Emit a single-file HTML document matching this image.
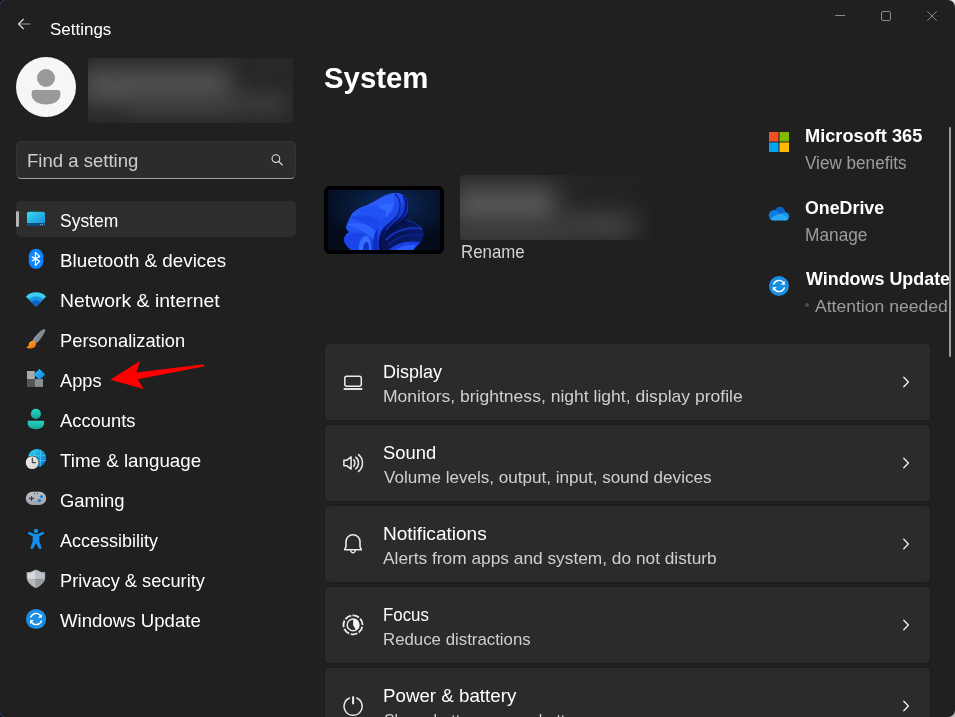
<!DOCTYPE html>
<html lang="en">
<head>
<meta charset="utf-8">
<title>Settings</title>
<style>
*{box-sizing:border-box;margin:0;padding:0}
html,body{width:955px;height:717px;overflow:hidden}
body{font-family:"Liberation Sans",sans-serif;color:#fff;position:relative;background:#202020}
.k{position:absolute;width:12px;height:12px}
.win{position:absolute;left:0;top:0;width:955px;height:717px;background:#202020;border-radius:7px;overflow:hidden}
.abs{position:absolute}
.t{position:absolute;white-space:nowrap;line-height:1;transform-origin:0 50%}
.card{position:absolute;left:324px;width:607px;height:78px;background:#2b2b2b;border:1px solid #1c1c1c;border-radius:5px}
svg{position:absolute;overflow:visible}
</style>
</head>
<body>
<div class="k" style="left:0;top:0;background:#070d1c"></div><div class="k" style="left:0;bottom:0;background:#070d1c"></div><div class="k" style="right:0;top:0;background:#e2e2e2"></div><div class="k" style="right:0;bottom:0;background:#bcbcbc"></div><div style="position:absolute;left:-1px;top:-1px;width:16px;height:16px;border:1px solid rgba(64,72,92,.9);border-right:0;border-bottom:0;border-radius:8px 0 0 0"></div><div style="position:absolute;left:-1px;bottom:-1px;width:16px;height:16px;border:1px solid rgba(64,72,92,.9);border-right:0;border-top:0;border-radius:0 0 0 8px"></div>
<div class="win">
<svg style="left:16px;top:16px" width="16" height="16" viewBox="0 0 16 16"><path d="M2.600 8 H13.800" stroke="#9c9c9c" stroke-width="1.200" stroke-linecap="round"/><path d="M7.400 3.300 L2.600 8 L7.400 12.700" fill="none" stroke="#dcdcdc" stroke-width="1.200" stroke-linecap="round" stroke-linejoin="round"/></svg>
<div class="t" style="left:49.80px;top:22.19px;font-size:15.84px;color:#ffffff;transform:scaleX(1.0720);">Settings</div>
<svg style="left:830px;top:8px" width="112" height="16" viewBox="830 8 112 16"><path d="M835.200 15.500 H845" stroke="#8c8c8c" stroke-width="1"/><rect x="881.500" y="11.500" width="9" height="9" rx="1.400" fill="none" stroke="#8c8c8c" stroke-width="1"/><path d="M927.300 11.200 L936.700 20.800 M936.700 11.200 L927.300 20.800" stroke="#8c8c8c" stroke-width="1"/></svg>

<div class="abs" style="left:16px;top:57px;width:60px;height:60px;border-radius:50%;background:#f6f6f6"></div>
<div class="abs" style="left:37px;top:69.400px;width:18px;height:18px;border-radius:50%;background:#999"></div>
<svg style="left:31px;top:89px" width="30" height="16" viewBox="31 89 30 16"><path d="M34.100 90 H57.900 A2.500 2.500 0 0 1 60.400 92.500 V94.500 C60.400 101 53.500 104.500 46 104.500 C38.500 104.500 31.600 101 31.600 94.500 V92.500 A2.500 2.500 0 0 1 34.100 90 Z" fill="#999"/></svg>
<div class="abs" style="left:88px;top:58px;width:205px;height:65px;background:#282828;border-radius:3px;overflow:hidden"><div style="position:absolute;left:-6px;top:10px;width:148px;height:36px;background:#525252;filter:blur(11px)"></div><div style="position:absolute;left:40px;top:38px;width:156px;height:16px;background:#424242;filter:blur(10px)"></div></div>

<div class="abs" style="left:16px;top:141px;width:280px;height:38px;background:#2c2c2c;border:1px solid #343434;border-bottom:1px solid #9c9c9c;border-radius:5px"></div>
<div class="t" style="left:27.29px;top:151.80px;font-size:18.31px;color:#cdcdcd;transform:scaleX(1.0133);">Find a setting</div>
<svg style="left:268px;top:150px" width="20" height="20" viewBox="268 150 20 20"><circle cx="275.900" cy="158.600" r="3.850" fill="none" stroke="#dedede" stroke-width="1.100"/><path d="M278.900 161.600 L282.200 164.900" stroke="#e8e8e8" stroke-width="1.300" stroke-linecap="round"/></svg>

<div class="abs" style="left:16px;top:201px;width:280px;height:36px;background:#2d2d2d;border-radius:5px"></div>
<div class="abs" style="left:16px;top:211px;width:3px;height:16px;background:#b4b4b4;border-radius:1.500px"></div>
<div class="t" style="left:60.40px;top:211.80px;font-size:18.31px;color:#ffffff;transform:scaleX(0.9546);">System</div><div class="t" style="left:60.07px;top:251.80px;font-size:18.31px;color:#ffffff;transform:scaleX(1.0269);">Bluetooth &amp; devices</div><div class="t" style="left:60.04px;top:291.80px;font-size:18.31px;color:#ffffff;transform:scaleX(1.0608);">Network &amp; internet</div><div class="t" style="left:60.10px;top:331.80px;font-size:18.31px;color:#ffffff;transform:scaleX(0.9998);">Personalization</div><div class="t" style="left:60.20px;top:371.80px;font-size:18.31px;color:#ffffff;transform:scaleX(0.9963);">Apps</div><div class="t" style="left:60.20px;top:411.80px;font-size:18.31px;color:#ffffff;transform:scaleX(1.0038);">Accounts</div><div class="t" style="left:60.40px;top:451.80px;font-size:18.31px;color:#ffffff;transform:scaleX(1.0257);">Time &amp; language</div><div class="t" style="left:59.80px;top:491.80px;font-size:18.31px;color:#ffffff;transform:scaleX(1.0081);">Gaming</div><div class="t" style="left:60.20px;top:531.80px;font-size:18.31px;color:#ffffff;transform:scaleX(0.9832);">Accessibility</div><div class="t" style="left:60.10px;top:571.80px;font-size:18.31px;color:#ffffff;transform:scaleX(0.9963);">Privacy &amp; security</div><div class="t" style="left:60.40px;top:611.80px;font-size:18.31px;color:#ffffff;transform:scaleX(1.0179);">Windows Update</div>
<svg style="left:0;top:0" width="60" height="717" viewBox="0 0 60 717">
<defs>
<linearGradient id="gSys" x1="0" y1="0" x2="1" y2="1"><stop offset="0" stop-color="#35dcf0"/><stop offset="1" stop-color="#1688d6"/></linearGradient>
<linearGradient id="gBrush" x1="0" y1="0" x2="1" y2="0.6"><stop offset="0" stop-color="#a9b2bb"/><stop offset="1" stop-color="#6a747d"/></linearGradient>
<linearGradient id="gOr" x1="0" y1="0" x2="1" y2="1"><stop offset="0" stop-color="#ffc21a"/><stop offset="1" stop-color="#f25a12"/></linearGradient>
<linearGradient id="gDia" x1="0" y1="0" x2="1" y2="1"><stop offset="0" stop-color="#34bcfb"/><stop offset="1" stop-color="#0c7edc"/></linearGradient>
<linearGradient id="gTeal" x1="0" y1="0" x2="0" y2="1"><stop offset="0" stop-color="#27d4c0"/><stop offset="1" stop-color="#16a596"/></linearGradient>
<linearGradient id="gGlobe" x1="0.1" y1="0.1" x2="0.9" y2="0.9"><stop offset="0" stop-color="#2ad0ec"/><stop offset="1" stop-color="#1270d6"/></linearGradient>
<linearGradient id="gClock" x1="0" y1="0" x2="1" y2="1"><stop offset="0" stop-color="#f2f2f2"/><stop offset="1" stop-color="#cfcfcf"/></linearGradient>
<linearGradient id="gPad" x1="0" y1="0" x2="0" y2="1"><stop offset="0" stop-color="#bcc1c8"/><stop offset="1" stop-color="#9ca1a8"/></linearGradient>
<clipPath id="cGlobe"><circle cx="37.1" cy="458" r="9.1"/></clipPath>
<clipPath id="cShield"><path d="M26.800 572.300 H29.600 C32.400 572.300 33.200 569.800 35.900 569.800 C38.600 569.800 39.400 572.300 42.200 572.300 H45.100 V577.500 C45.100 582 40.300 586.200 35.900 588.100 C31.500 586.200 26.800 582 26.800 577.500 Z"/></clipPath>
</defs>
<!-- system -->
<rect x="27" y="211.8" width="18" height="14.2" rx="1.6" fill="url(#gSys)"/>
<path d="M27 222.9 H45 V224.600 A1.5 1.500 0 0 1 43.500 226 H28.500 A1.500 1.500 0 0 1 27 224.600 Z" fill="#0b4f78"/>
<rect x="39.900" y="224.100" width="1" height="1" fill="#9fc4dc"/><rect x="42" y="224.100" width="1" height="1" fill="#9fc4dc"/>
<!-- bluetooth -->
<rect x="28.700" y="248.800" width="14.700" height="20.300" rx="7.350" ry="7.900" fill="#0a84ff"/>
<path d="M32.200 256.900 L39.700 261.350 L35.450 265.350 V252.350 L39.700 256.350 L32.200 260.800" fill="none" stroke="#fff" stroke-width="1.250" stroke-linejoin="round" stroke-linecap="round"/>
<!-- wifi -->
<clipPath id="cWifi"><path d="M36 306.500 L25.900 296.400 A14.300 14.300 0 0 1 46.100 296.400 Z"/></clipPath>
<g clip-path="url(#cWifi)"><rect x="24" y="290" width="24" height="18" fill="#3ccdf5"/><circle cx="36" cy="306.500" r="10.300" fill="#1a94e6"/><circle cx="36" cy="306.500" r="6.300" fill="#0b66c6"/></g>
<!-- brush -->
<path d="M32.300 340.600 C35 336.500 39.500 331.500 43.200 329.300 C44.500 328.600 45.700 329.600 45.300 330.800 C43.800 335 39.800 340.500 36.700 343.300 Z" fill="url(#gBrush)"/>
<path d="M31.800 341.100 C34.500 340.300 36.800 342.600 35.800 345.500 C34.800 348.300 30.500 349.300 26 347.700 C28.300 346.800 28.600 345.500 28.800 344.200 C29 342.700 30.200 341.500 31.800 341.100 Z" fill="url(#gOr)"/>
<!-- apps -->
<rect x="27" y="371" width="7.800" height="8" fill="#a8abb0"/>
<rect x="27" y="379" width="7.800" height="7.900" fill="#54575b"/>
<rect x="34.800" y="379" width="8.200" height="7.900" fill="#8b8e93"/>
<path d="M39.450 369.550 L44.400 374.500 L39.450 379.450 L34.500 374.500 Z" fill="url(#gDia)" stroke="url(#gDia)" stroke-width="1.100" stroke-linejoin="round"/>
<!-- accounts -->
<circle cx="35.900" cy="413.900" r="5.050" fill="url(#gTeal)"/>
<path d="M28.900 420.800 H42.900 A1.200 1.200 0 0 1 44.100 422 V423.200 C44.100 427.200 40.300 429.150 35.900 429.150 C31.500 429.150 27.700 427.200 27.700 423.200 V422 A1.200 1.200 0 0 1 28.900 420.800 Z" fill="url(#gTeal)"/>
<!-- time -->
<circle cx="37.100" cy="458" r="9.100" fill="url(#gGlobe)"/>
<g clip-path="url(#cGlobe)" stroke="#34d4f2" stroke-width="0.900" fill="none" opacity="0.85">
<path d="M28 455.700 H47 M28 460.500 H47 M40.500 448 V468"/><path d="M37.100 448.900 C32.500 452 32.500 464 37.100 467.100"/>
</g>
<circle cx="32.200" cy="462.600" r="6.900" fill="#202020"/>
<circle cx="32.200" cy="462.600" r="6.450" fill="url(#gClock)"/>
<path d="M32.400 458.200 V462.600 H35.500" fill="none" stroke="#4a4a4a" stroke-width="1.400" stroke-linecap="round" stroke-linejoin="round"/>
<!-- gaming -->
<rect x="25.800" y="491.800" width="20.400" height="13.200" rx="6.600" fill="url(#gPad)"/>
<path d="M29.600 498.400 H33.400 M31.500 496.500 V500.300" stroke="#3a3c40" stroke-width="1.250" stroke-linecap="round"/>
<circle cx="34.500" cy="493.500" r="0.600" fill="#3a3c40"/><circle cx="37.500" cy="493.500" r="0.600" fill="#3a3c40"/>
<circle cx="41.500" cy="496.500" r="1.600" fill="#0a80e0"/><circle cx="39.400" cy="500.500" r="1.600" fill="#0a80e0"/>
<!-- accessibility -->
<circle cx="36" cy="531" r="2.150" fill="#1490ea"/>
<path d="M28.400 532.300 C29.200 531.800 30 532 30.800 532.400 L33.800 533.700 C35.200 534.200 36.800 534.200 38.200 533.700 L41.200 532.400 C42 532 42.800 531.800 43.600 532.300 C44.300 532.900 44.100 533.900 43.300 534.300 L39.300 536.200 V541.500 L41.400 547.300 C41.700 548.200 41.200 548.900 40.400 549 C39.600 549.100 38.900 548.800 38.600 548 L36 543.200 L33.400 548 C33.100 548.800 32.400 549.100 31.600 549 C30.800 548.900 30.300 548.200 30.600 547.300 L32.700 541.500 V536.200 L28.700 534.300 C27.900 533.900 27.700 532.900 28.400 532.300 Z" fill="#1490ea"/>
<!-- privacy -->
<g clip-path="url(#cShield)">
<rect x="26" y="569" width="9.900" height="10.100" fill="#d6dade"/><rect x="35.900" y="569" width="10" height="10.100" fill="#bbbfc5"/>
<rect x="26" y="579.100" width="9.900" height="10" fill="#b7bbc0"/><rect x="35.900" y="579.100" width="10" height="10" fill="#989ba1"/>
<path d="M26.800 572.300 H29.600 C32.400 572.300 33.200 569.800 35.900 569.800 C38.600 569.800 39.400 572.300 42.200 572.300 H45.100 V577.500 C45.100 582 40.300 586.200 35.900 588.100 C31.500 586.200 26.800 582 26.800 577.500 Z" fill="none" stroke="#a6aab0" stroke-width="1.800" opacity="0.8"/>
</g>
<!-- update -->
<circle cx="36.100" cy="619" r="10.100" fill="#1a8ee2"/>
<path d="M30.84 617.08 A5.60 5.60 0 0 1 40.69 615.79" fill="none" stroke="#fff" stroke-width="1.45" stroke-linecap="round"/><path d="M41.90 613.90 V617.80 H37.90 Z" fill="#fff"/><path d="M41.36 620.92 A5.60 5.60 0 0 1 31.51 622.21" fill="none" stroke="#fff" stroke-width="1.45" stroke-linecap="round"/><path d="M30.00 624.00 V620.10 H33.90 Z" fill="#fff"/>
</svg>
<svg style="left:0;top:0" width="320" height="717" viewBox="0 0 320 717"><path d="M110.300 379.800 L140 361.100 L136.400 372.400 L204 364.200 L204 366.600 L137.700 379.200 L143.700 389 Z" fill="#ff0000"/></svg>

<div class="t" style="left:324.00px;top:63.20px;font-size:30.23px;color:#ffffff;transform:scaleX(0.9712);font-weight:bold;">System</div>
<div class="abs" style="left:324px;top:186px;width:120px;height:68px;background:#000;border-radius:6px"></div>
<svg style="left:328px;top:190px" width="112" height="60" viewBox="0 0 112 60">
<defs>
<radialGradient id="gBg" cx="0.55" cy="0.25" r="0.65"><stop offset="0" stop-color="#0c2d5e"/><stop offset="0.45" stop-color="#081c3e"/><stop offset="1" stop-color="#040b1b"/></radialGradient>
<linearGradient id="gB1" x1="0" y1="0" x2="1" y2="1"><stop offset="0" stop-color="#2b62ff"/><stop offset="1" stop-color="#1538e0"/></linearGradient>
<linearGradient id="gB3" x1="0" y1="0" x2="1" y2="0.600"><stop offset="0" stop-color="#071256"/><stop offset="0.6" stop-color="#050c38"/><stop offset="1" stop-color="#0a1e78"/></linearGradient>
<linearGradient id="gFold" x1="0" y1="0" x2="0" y2="1"><stop offset="0" stop-color="#1335d0"/><stop offset="0.4" stop-color="#0d28b4"/><stop offset="0.58" stop-color="#07145c"/><stop offset="1" stop-color="#050e42"/></linearGradient>
<clipPath id="cDev"><rect x="0" y="0" width="112" height="60" rx="1"/></clipPath>
<clipPath id="cSil"><path d="M24 61 C18 56 15 52 16 48 C17 45 19 43 21 42 C18 40 17 37 18.600 35 C19.500 32 21 29 22 27.200 C23 24 25 22 28 20 C32 17 37 15.500 41 14 C45 12 49 9 53 7 C57 5 60 3.500 64 3 C68 2.500 71 3 73.500 4 C77 5.500 79 8 79.500 11 C80.500 14 81 18 80.500 21 C80 25 79.500 28 78.500 30 C80 30.500 82 31 84.500 32 C88 33.500 91 35.500 93.500 38 C95.500 40 96 43 95.500 45.500 C95 49 93.500 51.500 91.500 53.500 C89 56 86.500 58 84.500 61 Z"/></clipPath>
</defs>
<g clip-path="url(#cDev)">
<rect width="112" height="60" fill="url(#gBg)"/>
<g clip-path="url(#cSil)">
<rect width="112" height="62" fill="url(#gB3)"/>
<!-- right petal streaks -->
<path d="M58 50 C66 41 80 36 94 39" fill="none" stroke="#1230b8" stroke-width="2.200"/>
<path d="M60 55 C68 47 82 43 96 45" fill="none" stroke="#0b2290" stroke-width="1.600"/>
<path d="M60 61 C66 54 78 50 92 52 L86 61 Z" fill="#1a3fe2"/>
<path d="M66 61 C72 56 80 54 88 55 L85 61 Z" fill="#2a5cff"/>
<path d="M78.500 30 C84 31 90 33.500 94 38.500" fill="none" stroke="#1a40d8" stroke-width="1.400"/>
<!-- bright region -->
<path d="M24 61 C18 56 15 52 16 48 C17 45 19 43 21 42 C18 40 17 37 18.600 35 C19.500 32 21 29 22 27.200 C23 24 25 22 28 20 C32 17 37 15.500 41 14 C45 12 49 9 53 7 C57 5 60 3.500 64 3 C68 2.500 71 3 73.500 4 C77 5.500 79 8 79.500 11 C80.500 14 80.500 18 80 21 C79 25 76 28 72 31 C67 34 62 37 58 41 C55 44 53.500 48 54 52 L56 61 Z" fill="url(#gB1)"/>
<path d="M73.500 4 C77 5.500 79 8 79.500 11 C80.500 14 80.500 18 80 21 C79 25 76 28 72 31 C67 34 62 37 58 41 C55 44 53.500 48 54 52 L56 61 H52 C50 54 50.500 46 54 40 C58 34 66 30 71 24 C75 18 76 10 73.500 4 Z" fill="url(#gFold)"/>
<path d="M67 4 C72 8 74 16 70 24 C66 30 60 34 56 40" fill="none" stroke="#0a1f96" stroke-width="1.100"/>
<path d="M76 6 C79.500 12 79 20 75 26 C70 32 63 36 59 41 C56 45 55 50 56 54" fill="none" stroke="#06135e" stroke-width="1.300"/>
<path d="M71 3.500 C76 9 77 17 73 24 C69 30 62 34 58 40" fill="none" stroke="#2a5cf8" stroke-width="0.800"/>
<!-- lobes -->
<path d="M41 14 C48 11 58 6 64 4.500 C67 8 67 14 64 19 C58 17 49 16 41 14 Z" fill="#2a5cfa"/>
<path d="M50 16.500 C56 13.500 62 12.500 66 14.500 C65 20 62 24 58 27.500 C57 22 54 19 50 16.500 Z" fill="#3068ff"/>
<path d="M28 20 C36 17 50 16 58 21 C58 25 56 28 54 31 C46 25 36 22 28 20 Z" fill="#2352f4"/>
<path d="M22 27.200 C30 24 44 25 52 31 C50 35 49 38 48 41 C42 34 30 31 22 27.200 Z" fill="#1c46ec"/>
<path d="M18.600 35 C26 31 40 33 47 41 C46 45 45.500 48 45.500 51 C40 42 28 38 18.600 35 Z" fill="#2c62fd"/>
<path d="M16 48 C22 41 36 41 44 49 L45 61 H24 C18 56 15 52 16 48 Z" fill="#1b44ea"/>
<path d="M31 61 C30 53 33 47 38 46 C42 46 43 52 43 61 Z" fill="#336eff"/>
<path d="M35 61 C35 55 37 52 39 52 C41 53 41 57 41 61 Z" fill="#1234c4"/>
<path d="M45 61 C44 52 46 44 50 38 C49 46 50 54 52 61 Z" fill="#0f2fc4"/>
</g>
</g>
</svg>
<div class="abs" style="left:460px;top:175px;width:191px;height:65px;background:linear-gradient(90deg,#272727 0,#252525 55%,#212121 100%);border-radius:3px;overflow:hidden"><div style="position:absolute;left:-6px;top:12px;width:102px;height:44px;background:#585858;filter:blur(12px)"></div><div style="position:absolute;left:104px;top:40px;width:70px;height:22px;background:#4a4a4a;filter:blur(12px)"></div><div style="position:absolute;left:-6px;top:44px;width:120px;height:24px;background:#3c3c3c;filter:blur(10px)"></div></div>
<div class="t" style="left:461.37px;top:242.74px;font-size:18.02px;color:#d2d2d2;transform:scaleX(0.9348);">Rename</div>
<svg style="left:769px;top:132px" width="20" height="20" viewBox="0 0 20 20"><rect x="0" y="0" width="9.500" height="9.500" fill="#f25022"/><rect x="10.500" y="0" width="9.500" height="9.500" fill="#7fba00"/><rect x="0" y="10.500" width="9.500" height="9.500" fill="#00a4ef"/><rect x="10.500" y="10.500" width="9.500" height="9.500" fill="#ffb900"/></svg>
<div class="t" style="left:804.57px;top:127.59px;font-size:17.73px;color:#ffffff;transform:scaleX(1.0268);font-weight:bold;">Microsoft 365</div><div class="t" style="left:804.80px;top:154.63px;font-size:17.44px;color:#9c9c9c;transform:scaleX(0.9819);">View benefits</div>
<svg style="left:760px;top:200px" width="40" height="28" viewBox="760 200 40 28"><circle cx="780" cy="211.900" r="5.050" fill="#0a62c2"/><ellipse cx="773.900" cy="215.300" rx="5.100" ry="5.200" fill="#0f7bdf"/><path d="M773.900 210.100 C776 210.100 778 211.300 779 213 L781 216 L776 219 Z" fill="#0f7bdf"/><circle cx="785" cy="216.350" r="4.150" fill="#1590e7"/><path d="M783 212.800 L786 212.400 L787 218 L780 218 Z" fill="#1590e7"/><path d="M770.300 219.100 C773 216.800 777 214.400 780.200 213.600 C783.200 214.400 786.200 216.400 788.400 218.500 C787.700 219.800 786.600 220.500 785 220.500 H773.900 C772.200 220.500 771 220 770.300 219.100 Z" fill="#2aaaf2"/></svg>
<div class="t" style="left:804.70px;top:199.59px;font-size:17.73px;color:#ffffff;transform:scaleX(1.0047);font-weight:bold;">OneDrive</div><div class="t" style="left:804.61px;top:226.83px;font-size:17.44px;color:#9c9c9c;transform:scaleX(0.9916);">Manage</div>
<svg style="left:0;top:0" width="955" height="400" viewBox="0 0 955 400"><circle cx="779" cy="286" r="10" fill="#1a8ee2"/><path d="M773.74 284.08 A5.60 5.60 0 0 1 783.59 282.79" fill="none" stroke="#fff" stroke-width="1.45" stroke-linecap="round"/><path d="M784.80 280.90 V284.80 H780.80 Z" fill="#fff"/><path d="M784.26 287.92 A5.60 5.60 0 0 1 774.41 289.21" fill="none" stroke="#fff" stroke-width="1.45" stroke-linecap="round"/><path d="M772.90 291.00 V287.10 H776.80 Z" fill="#fff"/></svg>
<div class="abs" style="left:805px;top:268px;width:144px;height:24px;overflow:hidden"><div style="position:absolute;left:-805px;top:-268px"><div class="t" style="left:805.60px;top:271.19px;font-size:17.73px;color:#ffffff;transform:scaleX(1.0104);font-weight:bold;">Windows Update</div></div></div>
<div class="abs" style="left:805px;top:303px;width:4px;height:4px;border-radius:50%;background:#4c4c4c"></div>
<div class="t" style="left:814.80px;top:298.48px;font-size:17.15px;color:#9c9c9c;transform:scaleX(1.0241);">Attention needed</div>
<div class="abs" style="left:949px;top:127px;width:2px;height:230px;background:#9c9c9c;border-radius:1px"></div>
<div class="card" style="top:343px"></div><div class="card" style="top:424px"></div><div class="card" style="top:505px"></div><div class="card" style="top:586px"></div><div class="card" style="top:667px"></div>
<div class="t" style="left:383.40px;top:362.74px;font-size:18.02px;color:#ffffff;transform:scaleX(0.9989);">Display</div><div class="t" style="left:383.37px;top:387.80px;font-size:17.01px;color:#cfcfcf;transform:scaleX(1.0316);">Monitors, brightness, night light, display profile</div><div class="t" style="left:383.20px;top:443.74px;font-size:18.02px;color:#ffffff;transform:scaleX(1.0220);">Sound</div><div class="t" style="left:384.00px;top:468.80px;font-size:17.01px;color:#cfcfcf;transform:scaleX(1.0045);">Volume levels, output, input, sound devices</div><div class="t" style="left:383.34px;top:524.74px;font-size:18.02px;color:#ffffff;transform:scaleX(1.0564);">Notifications</div><div class="t" style="left:382.80px;top:549.80px;font-size:17.01px;color:#cfcfcf;transform:scaleX(1.0177);">Alerts from apps and system, do not disturb</div><div class="t" style="left:383.46px;top:605.74px;font-size:18.02px;color:#ffffff;transform:scaleX(0.9365);">Focus</div><div class="t" style="left:383.41px;top:630.80px;font-size:17.01px;color:#cfcfcf;transform:scaleX(0.9892);">Reduce distractions</div><div class="t" style="left:383.36px;top:686.74px;font-size:18.02px;color:#ffffff;transform:scaleX(1.0396);">Power &amp; battery</div><div class="t" style="left:384.00px;top:711.80px;font-size:17.01px;color:#cfcfcf;transform:scaleX(0.9356);">Sleep, battery usage, battery saver</div>
<svg style="left:0;top:0" width="955" height="717" viewBox="0 0 955 717"><rect x="344.800" y="376.200" width="16.500" height="10" rx="2" stroke="#ececec" fill="none" stroke-linejoin="round" stroke-width="1.5" stroke-linecap="round"/><path d="M343.700 389 H362.300" stroke="#ececec" fill="none" stroke-linejoin="round" stroke-width="1.9" stroke-linecap="butt"/><path d="M343.900 460.200 H347 L351.100 456.900 V469.100 L347 465.800 H343.900 Z" stroke="#ececec" fill="none" stroke-linejoin="round" stroke-width="1.5" stroke-linecap="round"/><path d="M353.800 459.700 A5.900 5.900 0 0 1 353.800 466.300 M355.700 457.200 A7.400 7.400 0 0 1 355.700 468.800 M358.600 454.600 A11 11 0 0 1 358.600 471.400" stroke="#ececec" fill="none" stroke-linejoin="round" stroke-width="1.5" stroke-linecap="round"/><path d="M346 546.500 V541.700 A7 7 0 0 1 360 541.700 V546.500 L361.300 549.700 H344.700 Z" stroke="#ececec" fill="none" stroke-linejoin="round" stroke-width="1.6" stroke-linecap="round"/><path d="M350.700 550.500 A2.350 2.800 0 0 0 355.300 550.500" stroke="#ececec" fill="none" stroke-linejoin="round" stroke-width="1.4" stroke-linecap="round"/><circle cx="353" cy="624.900" r="9.500" stroke="#ececec" fill="none" stroke-linejoin="round" stroke-width="1.8" stroke-linecap="butt" stroke-dasharray="6.900 1.627" transform="rotate(-93 353 624.900)"/><circle cx="353.100" cy="624.900" r="5.900" stroke="#ececec" fill="none" stroke-linejoin="round" stroke-width="1.4" stroke-linecap="round"/><path d="M353.100 624.900 V619 A5.900 5.900 0 0 1 355.87 630.11 Z" fill="#f4f4f4"/><path d="M353.100 696.300 V704.300" stroke="#ececec" fill="none" stroke-linejoin="round" stroke-width="2.0" stroke-linecap="butt"/><path d="M349.42 698.03 A9.050 9.050 0 1 0 356.78 698.03" stroke="#ececec" fill="none" stroke-linejoin="round" stroke-width="1.5" stroke-linecap="round"/><path d="M903.800 377.3 L908.400 382 L903.800 386.7" stroke="#ececec" fill="none" stroke-linejoin="round" stroke-width="1.4" stroke-linecap="round"/><path d="M903.800 458.3 L908.400 463 L903.800 467.7" stroke="#ececec" fill="none" stroke-linejoin="round" stroke-width="1.4" stroke-linecap="round"/><path d="M903.800 539.3 L908.400 544 L903.800 548.7" stroke="#ececec" fill="none" stroke-linejoin="round" stroke-width="1.4" stroke-linecap="round"/><path d="M903.800 620.3 L908.400 625 L903.800 629.7" stroke="#ececec" fill="none" stroke-linejoin="round" stroke-width="1.4" stroke-linecap="round"/><path d="M903.800 701.3 L908.400 706 L903.800 710.7" stroke="#ececec" fill="none" stroke-linejoin="round" stroke-width="1.4" stroke-linecap="round"/></svg>
</div>
</body>
</html>
